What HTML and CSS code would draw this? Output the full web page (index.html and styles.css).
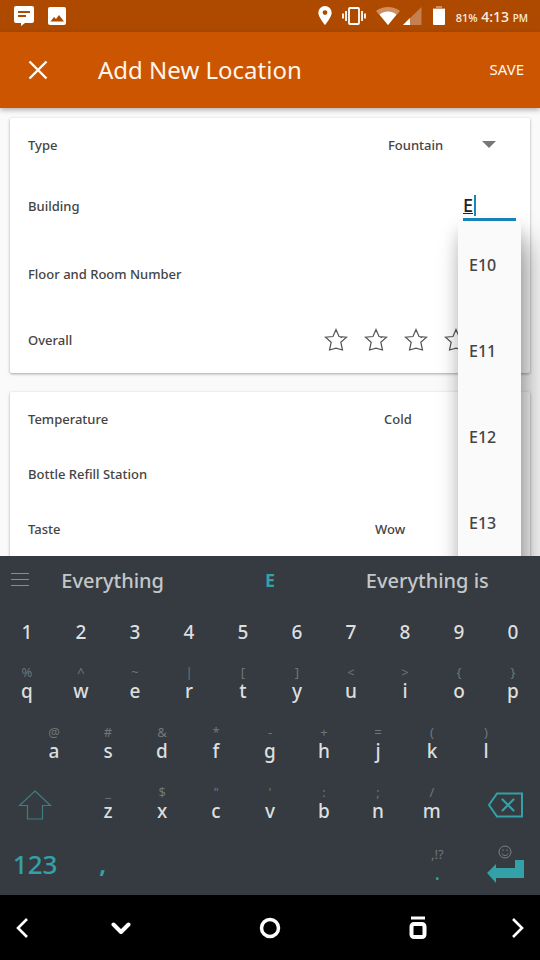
FILE: index.html
```html
<!DOCTYPE html>
<html lang="en">
<head>
<meta charset="utf-8">
<meta name="viewport" content="width=device-width, initial-scale=1">
<title>Add New Location</title>
<link rel="stylesheet" href="styles.css">
</head>
<body>
<div class="screen">
  <div class="status">
    <div class="status-group">
      <svg class="status-message" width="22" height="22" viewBox="0 0 22 22"><path fill="#fff" d="M3 1h16a2 2 0 0 1 2 2v13a2 2 0 0 1-2 2h-7l-4 3v-3H3a2 2 0 0 1-2-2V3a2 2 0 0 1 2-2z"/><path stroke="#ad4a00" stroke-width="2" d="M5 7h12M5 11h8"/></svg>
      <svg width="18" height="18" viewBox="0 0 18 18"><rect width="18" height="18" rx="2" fill="#fff"/><path fill="#ad4a00" d="M2.500 14.500l3.500-4.500 2 2 3-4 5 6.500z"/></svg>
    </div>
    <div class="status-group status-right">
      <svg width="14" height="20" viewBox="0 0 14 20"><path fill="#fff" fill-rule="evenodd" d="M7 0a6.700 6.700 0 0 1 6.700 6.700C13.700 11 7 19 7 19S.3 11 .3 6.700A6.700 6.700 0 0 1 7 0zm0 4.200a2.400 2.400 0 1 0 0 4.800 2.400 2.400 0 0 0 0-4.800z"/></svg>
      <svg width="24" height="20" viewBox="0 0 24 20" fill="none" stroke="#fff" stroke-width="1.800"><rect x="7" y="2" width="10" height="16" rx="1"/><path d="M4 5v10M1 7.500v5M20 5v10M23 7.500v5"/></svg>
      <svg class="status-signal" width="46" height="20" viewBox="0 0 46 20"><path fill="#cf8f62" d="M0 5C7-.5 17-.5 24 5L12 19z"/><path fill="#fff" d="M3.500 8.500c5-4 12-4 17 0L12 19z"/><path fill="#c67f4f" d="M45.500 1v18H27z"/><path fill="#fff" d="M34 12v7h-7z"/></svg>
      <svg width="14" height="20" viewBox="0 0 14 20"><path fill="#cf8f62" d="M4 0h6v2h3v1H1V2h3z"/><path fill="#fff" d="M1 3h12v15a1 1 0 0 1-1 1H2a1 1 0 0 1-1-1z"/></svg>
      <div class="clock"><span class="battery">81%</span> 4:13 <span class="meridiem">PM</span></div>
    </div>
  </div>

  <header class="appbar">
    <button class="close" type="button" aria-label="Close"><svg width="20" height="20" viewBox="0 0 20 20" stroke="#fff" stroke-width="2.400"><path d="M1.500 1.500l17 17M18.500 1.500l-17 17"/></svg></button>
    <h1>Add New Location</h1>
    <button class="save" type="submit" form="location">SAVE</button>
  </header>

  <main>
    <form id="location">
      <section class="card">
        <div class="row row-select">
          <label for="type">Type</label>
          <div class="picker picker-s"><select id="type"><option>Fountain</option></select></div>
        </div>
        <div class="row row-tall">
          <label for="building">Building</label>
          <div class="combo">
            <input id="building" type="text" value="E" autocomplete="off">
            <span class="caret"></span>
            <div class="menu">
              <button type="button">E10</button>
              <button type="button">E11</button>
              <button type="button">E12</button>
              <button type="button">E13</button>
            </div>
          </div>
        </div>
        <div class="row row-tall">
          <label for="room">Floor and Room Number</label>
          <input id="room" class="room" type="text">
        </div>
        <div class="row row-rating">
          <span>Overall</span>
          <div class="stars">
            <button type="button" aria-label="1 star"><svg width="24" height="24" viewBox="0 0 24 24"><path d="M12 1.500l3 7 7.500.7-5.700 5 1.700 7.800-6.500-1.800L5.500 22l1.700-7.800-5.700-5L9 8.500zM15 8.500l3 1.200"/></svg></button>
            <button type="button" aria-label="2 stars"><svg width="24" height="24" viewBox="0 0 24 24"><path d="M12 1.500l3 7 7.500.7-5.700 5 1.700 7.800-6.500-1.800L5.500 22l1.700-7.800-5.700-5L9 8.500zM15 8.500l3 1.200"/></svg></button>
            <button type="button" aria-label="3 stars"><svg width="24" height="24" viewBox="0 0 24 24"><path d="M12 1.500l3 7 7.500.7-5.700 5 1.700 7.800-6.500-1.800L5.500 22l1.700-7.800-5.700-5L9 8.500zM15 8.500l3 1.200"/></svg></button>
            <button type="button" aria-label="4 stars"><svg width="24" height="24" viewBox="0 0 24 24"><path d="M12 1.500l3 7 7.500.7-5.700 5 1.700 7.800-6.500-1.800L5.500 22l1.700-7.800-5.700-5L9 8.500zM15 8.500l3 1.200"/></svg></button>
            <button type="button" aria-label="5 stars"><svg width="24" height="24" viewBox="0 0 24 24"><path d="M12 1.500l3 7 7.500.7-5.700 5 1.700 7.800-6.500-1.800L5.500 22l1.700-7.800-5.700-5L9 8.500zM15 8.500l3 1.200"/></svg></button>
          </div>
        </div>
      </section>
      <section class="card">
        <div class="row">
          <label for="temperature">Temperature</label>
          <div class="picker picker-m"><select id="temperature"><option>Cold</option></select></div>
        </div>
        <div class="row">
          <label for="refill">Bottle Refill Station</label>
          <input id="refill" type="checkbox">
        </div>
        <div class="row">
          <label for="taste">Taste</label>
          <div class="picker picker-l"><select id="taste"><option>Wow</option></select></div>
        </div>
      </section>
    </form>
  </main>

  <div class="keyboard">
    <div class="suggestions">
      <button type="button" aria-label="Keyboard menu"><svg width="18" height="14" viewBox="0 0 18 14" stroke="#888d90"><path d="M0 .5h18M0 6.500h18M0 12.500h18"/></svg></button>
      <button type="button">Everything</button>
      <button type="button" class="current">E</button>
      <button type="button">Everything is</button>
    </div>
    <div class="keys numbers">
      <button type="button">1</button><button type="button">2</button><button type="button">3</button><button type="button">4</button><button type="button">5</button><button type="button">6</button><button type="button">7</button><button type="button">8</button><button type="button">9</button><button type="button">0</button>
    </div>
    <div class="keys">
      <button type="button"><small>%</small>q</button>
      <button type="button"><small>^</small>w</button>
      <button type="button"><small>~</small>e</button>
      <button type="button"><small>|</small>r</button>
      <button type="button"><small>[</small>t</button>
      <button type="button"><small>]</small>y</button>
      <button type="button"><small>&lt;</small>u</button>
      <button type="button"><small>&gt;</small>i</button>
      <button type="button"><small>{</small>o</button>
      <button type="button"><small>}</small>p</button>
    </div>
    <div class="keys keys-home">
      <button type="button"><small>@</small>a</button>
      <button type="button"><small>#</small>s</button>
      <button type="button"><small>&amp;</small>d</button>
      <button type="button"><small>*</small>f</button>
      <button type="button"><small>-</small>g</button>
      <button type="button"><small>+</small>h</button>
      <button type="button"><small>=</small>j</button>
      <button type="button"><small>(</small>k</button>
      <button type="button"><small>)</small>l</button>
    </div>
    <div class="keys keys-lower">
      <button type="button" class="wide" aria-label="Shift"><svg width="34" height="30" viewBox="0 0 34 30" fill="none" stroke="#3b7f84" stroke-width="1.200"><path d="M17 1l15.500 14.500h-8V29h-15V15.500h-8z"/></svg></button>
      <div class="letters">
        <button type="button"><small>_</small>z</button>
        <button type="button"><small>$</small>x</button>
        <button type="button"><small>"</small>c</button>
        <button type="button"><small>'</small>v</button>
        <button type="button"><small>:</small>b</button>
        <button type="button"><small>;</small>n</button>
        <button type="button"><small>/</small>m</button>
      </div>
      <button type="button" class="wide" aria-label="Backspace"><svg width="36" height="26" viewBox="0 0 36 26" fill="none" stroke="#34a0a8" stroke-width="2"><path d="M10 1.500h25v23H10L2 13z"/><path stroke-width="2.200" stroke-linecap="round" d="M15.500 7.500l11 11M26.500 7.500l-11 11"/></svg></button>
    </div>
    <div class="keys keys-bottom">
      <button type="button" class="mode">123</button>
      <button type="button" class="comma">,</button>
      <button type="button" aria-label="Space"></button>
      <button type="button" class="period"><small>,!?</small>.</button>
      <button type="button" class="enter" aria-label="Enter">
        <svg width="14" height="14" viewBox="0 0 14 14" fill="none" stroke="#7b8083"><circle cx="7" cy="7" r="6"/><path d="M4 8.500c1 2.700 5 2.700 6 0M5 4.500v1.500M9 4.500v1.500"/></svg>
        <svg width="38" height="24" viewBox="0 0 38 24"><path fill="#34a0a8" d="M29 1h9v18H10v5L1 14l9-9v4h19z"/></svg>
      </button>
    </div>
  </div>

  <nav class="navbar">
    <button type="button" aria-label="Previous"><svg width="14" height="20" viewBox="0 0 14 20"><path stroke-width="2.600" d="M12 1l-9 9 9 9"/></svg></button>
    <button type="button" aria-label="Hide keyboard"><svg width="20" height="14" viewBox="0 0 20 14"><path stroke-width="4" stroke-linecap="round" stroke-linejoin="round" d="M2.500 3.500L10 11l7.500-7.500"/></svg></button>
    <button type="button" aria-label="Home"><svg width="22" height="22" viewBox="0 0 22 22"><circle cx="11" cy="11" r="8.500" stroke-width="3.500"/></svg></button>
    <button type="button" aria-label="Recent apps"><svg width="18" height="24" viewBox="0 0 18 24"><path stroke-width="3" d="M2 2h14"/><rect x="2.500" y="8" width="13" height="13" rx="2.500" stroke-width="4"/></svg></button>
    <button type="button" aria-label="Next"><svg width="14" height="20" viewBox="0 0 14 20"><path stroke-width="2.600" d="M2 1l9 9-9 9"/></svg></button>
  </nav>
</div>
</body>
</html>
```
FILE: styles.css
```css
* { box-sizing: border-box; }

body {
  margin: 0;
  font-family: "Noto Sans", sans-serif;
  font-size: 13px;
  font-weight: 500;
  color: #444;
}

button, input, select {
  margin: 0;
  padding: 0;
  border: 0;
  background: none;
  font: inherit;
  color: inherit;
  outline: 0;
}

svg { display: block; flex: none; }

.screen {
  display: flex;
  flex-direction: column;
  height: 100vh;
  overflow: hidden;
  background: #fafafa;
}

/* Status bar */
.status {
  display: flex;
  flex: none;
  justify-content: space-between;
  height: 32px;
  padding: 0 12px 0 13px;
  background: #ad4a00;
  color: #fff0e4;
}
.status-group { display: flex; align-items: center; gap: 13px; }
.status-right { gap: 10px; }
.clock { font-size: 14px; white-space: nowrap; }
.battery { font-size: 11px; }
.meridiem { font-size: 10px; }

/* App bar */
.appbar {
  position: relative;
  z-index: 1;
  display: flex;
  flex: none;
  align-items: center;
  height: 76px;
  padding: 0 16px 0 28px;
  background: #cb5500;
  box-shadow: 0 2px 5px rgba(0, 0, 0, .3);
  color: #fff5ec;
}
.appbar h1 {
  flex: 1;
  margin: 0 0 2px 50px;
  font-size: 24px;
  font-weight: 400;
}
.save { padding-bottom: 2px; font-size: 15px; font-weight: 400; }

/* Form cards */
main { flex: 1; min-height: 0; overflow: hidden; }
form { display: grid; gap: 19px; padding: 10px; }
.card {
  border-radius: 2px;
  background: #fff;
  box-shadow: 0 1px 3px rgba(0, 0, 0, .35);
}
.card:first-child { position: relative; z-index: 1; }
.row {
  display: flex;
  align-items: center;
  justify-content: space-between;
  height: 55px;
  padding: 0 14px 2px 18px;
}
.row-tall { height: 68px; }
.row-rating { height: 64px; }

.picker { display: flex; align-items: center; }
.picker::after {
  width: 0;
  margin-right: 20px;
  border: 7px solid transparent;
  border-top-color: #777;
  border-bottom: 0;
  content: "";
}
.picker select { flex: 1; min-width: 0; appearance: none; }
.picker-s { width: 128px; }
.picker-m { width: 132px; }
.picker-l { width: 141px; }

.combo { position: relative; width: 53px; }
.combo input {
  display: block;
  width: 100%;
  height: 30px;
  border-bottom: 3px solid #1a86c0;
  font-size: 18px;
  color: #222;
  text-decoration: underline;
}
.caret {
  position: absolute;
  top: 4px;
  left: 11px;
  width: 2px;
  height: 21px;
  background: #1a86c0;
}
.menu {
  position: absolute;
  top: 100%;
  right: -5px;
  left: -5px;
  padding: 1px 0 40px;
  border-radius: 2px;
  background: #fafafa;
  box-shadow: 8px 20px 28px rgba(0, 0, 0, .35), 0 8px 16px rgba(0, 0, 0, .15);
}
.menu button {
  display: block;
  width: 100%;
  height: 86px;
  padding-left: 11px;
  font-size: 16px;
  text-align: left;
}
.room { width: 53px; border-bottom: 1px solid #888; }

.stars { display: flex; }
.stars button { display: grid; place-items: center; width: 40px; }
.stars path { fill: none; stroke: #555; stroke-width: 1.2px; }

/* Keyboard */
.keyboard { flex: none; background: #353b40; color: #dcdedf; }
.suggestions {
  display: grid;
  grid-template-columns: 34px repeat(3, 1fr);
  align-items: center;
  height: 48px;
  padding-right: 34px;
  font-size: 20px;
  color: #c4c7c9;
}
.suggestions button:first-child { justify-self: center; padding-left: 6px; }
.suggestions .current { font-size: 18px; font-weight: 700; color: #34a0a8; }
.keys {
  display: grid;
  grid-template-columns: repeat(10, 1fr);
  height: 60px;
  font-size: 19px;
}
.keys button {
  display: flex;
  flex-direction: column;
  align-items: center;
  justify-content: center;
  min-width: 0;
  padding-bottom: 16px;
  line-height: 20px;
}
.keys small {
  font-size: 13px;
  font-weight: 400;
  line-height: 18px;
  color: #70767a;
}
.numbers { height: 56px; }
.numbers button { padding-bottom: 0; }
.keys-home { grid-template-columns: repeat(9, 1fr); padding: 0 5%; }
.keys-lower { grid-template-columns: 13fr 74fr 13fr; }
.keys-lower .wide { padding-bottom: 10px; }
.letters {
  display: grid;
  grid-template-columns: repeat(7, 1fr);
  padding: 0 11px;
}
.keys-bottom { grid-template-columns: 13fr 12fr 50fr 12fr 13fr; height: 55px; }
.keys-bottom button { padding-bottom: 8px; }
.keys-bottom .mode { font-size: 26px; }
.keys-bottom .mode, .comma, .period { color: #34a0a8; }
.comma { font-size: 24px; font-weight: 700; }

/* System navigation */
.navbar {
  display: grid;
  flex: none;
  grid-template-columns: 8fr 29fr 26fr 29fr 8fr;
  height: 65px;
  background: #000;
}
.navbar button { display: grid; place-items: center; }
.navbar svg { fill: none; stroke: #fff; }
```
